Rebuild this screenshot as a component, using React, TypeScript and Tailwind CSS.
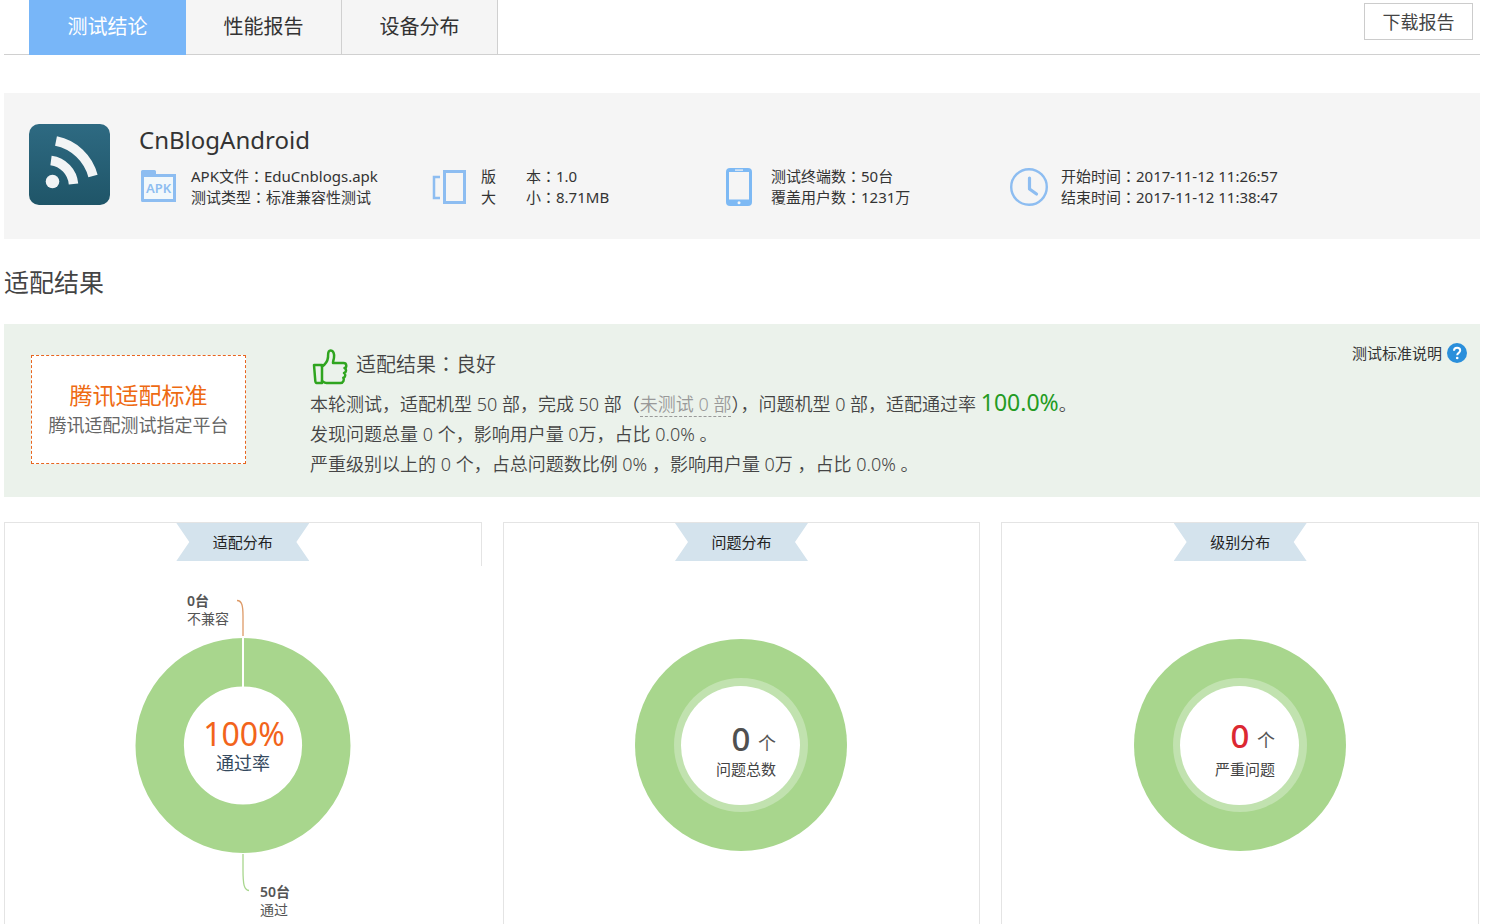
import type { ReactNode } from "react";

const tabs = ["测试结论", "性能报告", "设备分布"];

function AppLogo() {
  return (
    <svg className="size-[81px] shrink-0" viewBox="0 0 81 81" role="img" aria-label="CnBlogAndroid">
      <defs>
        <linearGradient id="logo-bg" x1="0" y1="0" x2="0" y2="1">
          <stop offset="0" stopColor="#2e6a82" />
          <stop offset="1" stopColor="#1f5568" />
        </linearGradient>
      </defs>
      <rect width="81" height="81" rx="10" fill="url(#logo-bg)" />
      <circle cx="23.500" cy="57.500" r="6.800" fill="#f2f4f5" />
      <path d="M22 36.500A26 26 0 0 1 44.500 60" fill="none" stroke="#f2f4f5" strokeWidth="9.500" />
      <path d="M27 17A48 48 0 0 1 64 52" fill="none" stroke="#f2f4f5" strokeWidth="9.500" />
    </svg>
  );
}

function ApkIcon() {
  return (
    <svg className="h-[34px] w-[36px]" viewBox="0 0 36 34" aria-hidden="true">
      <path d="M0 1.500Q0 0 1.500 0H13.500Q15 0 15 1.500V4H35V32H1.500Q0 32 0 30.500Z" fill="#8dbdf1" />
      <rect x="3" y="7" width="29" height="22" fill="#f2f8fb" />
      <text x="17.500" y="23" textAnchor="middle" fontSize="13" fontWeight="600" fill="#8dbdf1">APK</text>
    </svg>
  );
}

function VersionIcon() {
  return (
    <svg className="h-[36px] w-[34px]" viewBox="0 0 34 36" fill="none" stroke="#8dbdf1" aria-hidden="true">
      <rect x="12.500" y="2.500" width="20" height="31" strokeWidth="3" />
      <path d="M8 8H2V29H8" strokeWidth="2.500" />
    </svg>
  );
}

function PhoneIcon() {
  return (
    <svg className="h-[38px] w-[26px]" viewBox="0 0 26 38" aria-hidden="true">
      <rect width="26" height="38" rx="4" fill="#7db9f4" />
      <rect x="3" y="4" width="20" height="27.500" fill="#f5f5f5" />
      <rect x="9" y="1.500" width="8" height="1.200" fill="#f5f5f5" />
      <circle cx="13" cy="34.800" r="1.500" fill="#f5f5f5" />
    </svg>
  );
}

function ClockIcon() {
  return (
    <svg className="size-[38px]" viewBox="0 0 38 38" fill="none" stroke="#8dbdf1" strokeLinecap="round" strokeLinejoin="round" aria-hidden="true">
      <circle cx="19" cy="19" r="17.800" strokeWidth="2.400" />
      <path d="M19.500 10V21L26.500 26" strokeWidth="3.200" />
    </svg>
  );
}

function ThumbIcon() {
  return (
    <svg className="size-[36px]" viewBox="0 0 36 36" fill="none" stroke="#2fa51f" strokeWidth="2.500" strokeLinejoin="round" strokeLinecap="round" aria-hidden="true">
      <path d="M2 16H10V34H4.500Q3.500 34 3.300 32Z" />
      <path d="M10 17.500C13 15.500 15.500 12.500 16 8.500C16.200 5.500 15.500 1.500 18.500 1.500C21.500 1.500 22.500 5 22 8.500C21.800 10.500 21 12 21 14H31.500C35 14 35 18.500 32.500 19C34.800 20 34.500 23.500 32 24C34 25.200 33.500 28.300 31.300 28.800C32.500 30.500 31.500 34 28.500 34H14.500C12.500 34 11.500 33 10 32" />
    </svg>
  );
}

function HelpIcon() {
  return (
    <svg className="size-5" viewBox="0 0 20 20" aria-hidden="true">
      <circle cx="10" cy="10" r="10" fill="#2a8fdb" />
      <path d="M7 7.800C7 3.800 13.200 4 13.200 7.600C13.200 9.800 10.200 9.900 10.200 12.200" fill="none" stroke="#fff" strokeWidth="2" />
      <circle cx="10.200" cy="15" r="1.300" fill="#fff" />
    </svg>
  );
}

/* Full-width colon set in the middle of its cell. */
function Colon() {
  return <span className="font-['Noto_Sans_CJK_TC',sans-serif] leading-none">：</span>;
}

function InfoItem({ icon, children }: { icon: ReactNode; children: ReactNode }) {
  return (
    <li className="flex w-[290px] items-center">
      <span className="flex w-10 shrink-0 justify-center">{icon}</span>
      <div className="ml-3 text-[15px] leading-[21px] whitespace-nowrap">{children}</div>
    </li>
  );
}

function Ribbon({ title }: { title: string }) {
  return (
    <h3 className="mx-auto flex h-[38px] w-[133px] items-center justify-center bg-[#d4e3ed] text-[15px] text-[#222] [clip-path:polygon(0_0,100%_0,calc(100%-13px)_50%,100%_100%,0_100%,13px_50%)]">
      {title}
    </h3>
  );
}

function PassRateChart() {
  return (
    <svg className="mx-auto mt-[14px] block h-[340px] w-[300px]" viewBox="0 0 300 340" role="img" aria-label="适配分布">
      <circle cx="150" cy="165.500" r="83.300" fill="none" stroke="#a8d68d" strokeWidth="48.400" />
      <rect x="149" y="56" width="2" height="52" fill="#fff" />
      <path d="M144 20.500C149 20.500 150 26 150 36V56" fill="none" stroke="#dd9a68" strokeWidth="1.300" />
      <path d="M150 274V290C150 304 151 310 156 310.500" fill="none" stroke="#a8d68d" strokeWidth="1.300" />
      <g fill="#555" fontSize="14">
        <text x="94" y="26" fontWeight="600">0台</text>
        <text x="94" y="44">不兼容</text>
        <text x="167" y="317" fontWeight="600">50台</text>
        <text x="167" y="335">通过</text>
      </g>
      <text x="151" y="166" textAnchor="middle" fontSize="32" fill="#f2641b">100%</text>
      <text x="150" y="190" textAnchor="middle" fontSize="18" fill="#34495e">通过率</text>
    </svg>
  );
}

function CountChart({ label, color, baseline }: { label: string; color: string; baseline: number }) {
  return (
    <svg className="mx-auto mt-[19px] block h-[340px] w-[300px]" viewBox="0 0 300 340" role="img" aria-label={label}>
      <circle cx="150" cy="165" r="106" fill="#a8d68d" />
      <circle cx="150" cy="165" r="67" fill="#c1e2af" />
      <circle cx="149.500" cy="165.500" r="59.500" fill="#fff" />
      <text x="150" y={baseline} textAnchor="middle" fontSize="33" fontWeight="500" fill={color}>0</text>
      <text x="167" y={baseline - 1} fontSize="18" fontWeight="400" fill="#555">个</text>
      <text x="155" y="195" textAnchor="middle" fontSize="15" fontWeight="400" fill="#444">{label}</text>
    </svg>
  );
}

export default function App() {
  return (
    <div className="flex min-h-screen flex-col bg-white pr-[5px] pl-1 font-['Noto_Sans','Noto_Sans_CJK_SC',sans-serif] font-[390] text-[#333]">
      <header className="flex justify-between border-b border-[#d0d0d0] pr-[7px] pl-[25px]">
        <nav className="-mb-px flex">
          {tabs.map((tab, i) => (
            <a
              key={tab}
              href="#"
              aria-current={i === 0 ? "page" : undefined}
              className={
                i === 0
                  ? "flex h-[55px] w-[157px] items-center justify-center border-b border-[#78b6f8] bg-[#78b6f8] text-xl text-white"
                  : "flex h-[55px] w-[156px] items-center justify-center border-r border-b border-[#d0d0d0] bg-[#f5f5f5] text-xl text-[#333]"
              }
            >
              {tab}
            </a>
          ))}
        </nav>
        <button className="mt-[3px] h-[37px] w-[109px] border border-[#ccc] bg-white text-lg text-[#444]">下载报告</button>
      </header>

      <section className="mt-[38px] flex h-[146px] items-start bg-[#f5f5f5] px-[25px] pt-[31px]">
        <AppLogo />
        <div className="ml-[29px]">
          <h1 className="text-2xl leading-8">CnBlogAndroid</h1>
          <ul className="mt-[10px] flex">
            <InfoItem icon={<ApkIcon />}>
              <p>APK文件<Colon />EduCnblogs.apk</p>
              <p>测试类型<Colon />标准兼容性测试</p>
            </InfoItem>
            <InfoItem icon={<VersionIcon />}>
              <p><span className="inline-flex w-[60px] justify-between"><span>版</span><span>本</span></span><Colon />1.0</p>
              <p><span className="inline-flex w-[60px] justify-between"><span>大</span><span>小</span></span><Colon />8.71MB</p>
            </InfoItem>
            <InfoItem icon={<PhoneIcon />}>
              <p>测试终端数<Colon />50台</p>
              <p>覆盖用户数<Colon />1231万</p>
            </InfoItem>
            <InfoItem icon={<ClockIcon />}>
              <p>开始时间<Colon />2017-11-12 11:26:57</p>
              <p>结束时间<Colon />2017-11-12 11:38:47</p>
            </InfoItem>
          </ul>
        </div>
      </section>

      <h2 className="mt-[23px] text-[25px] leading-10 text-[#444]">适配结果</h2>

      <section className="mt-[22px] flex h-[173px] items-start bg-[#ebf2eb] pr-[13px] pl-[27px]">
        <div className="mt-[31px] flex h-[109px] w-[215px] flex-col items-center justify-center border border-dashed border-[#e8651f] bg-white">
          <strong className="text-[23px] leading-[30px] font-[390] text-[#ee6a12]">腾讯适配标准</strong>
          <span className="text-lg leading-[30px] text-[#666]">腾讯适配测试指定平台</span>
        </div>
        <div className="mt-[25px] ml-16 flex-1 text-lg leading-[30px] font-[360] text-[#444]">
          <div className="mb-[2px] ml-[2px] flex items-start gap-2 text-xl leading-8">
            <ThumbIcon />
            <span>适配结果<Colon />良好</span>
          </div>
          <p>
            本轮测试，适配机型 50 部，完成 50 部（
            <span className="border-b border-dashed border-[#999] text-[#999]">未测试 0 部</span>
            ），问题机型 0 部，适配通过率 <span className="text-[23px] leading-[30px] font-[390] text-[#239b23]">100.0%</span>。
          </p>
          <p>发现问题总量 0 个，影响用户量 0万，占比 0.0% 。</p>
          <p>严重级别以上的 0 个，占总问题数比例 0% ，影响用户量 0万 ，占比 0.0% 。</p>
        </div>
        <a href="#" className="mt-[19px] flex items-center gap-[5px] text-[15px] leading-5 text-[#333]">
          测试标准说明
          <HelpIcon />
        </a>
      </section>

      <div className="mt-[25px] mr-px grid flex-1 grid-cols-3 gap-[21px]">
        <section className="border-t border-l border-[#e4e4e4]">
          <div className="h-[43px] border-r border-[#e4e4e4]">
            <Ribbon title="适配分布" />
          </div>
          <PassRateChart />
        </section>
        <section className="border-x border-t border-[#e4e4e4]">
          <Ribbon title="问题分布" />
          <CountChart label="问题总数" color="#505050" baseline={171} />
        </section>
        <section className="border-x border-t border-[#e4e4e4]">
          <Ribbon title="级别分布" />
          <CountChart label="严重问题" color="#dc2832" baseline={168} />
        </section>
      </div>
    </div>
  );
}
